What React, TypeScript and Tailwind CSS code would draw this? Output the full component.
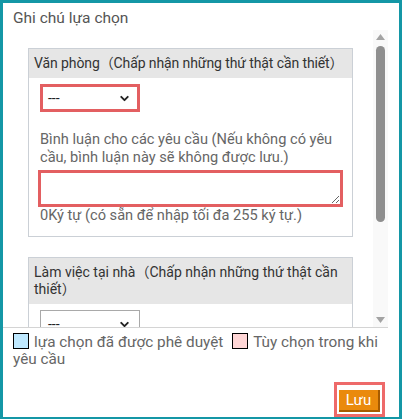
import { ChevronDown } from 'lucide-react'

function Select({ highlight }: { highlight?: boolean }) {
  return (
    <div
      className={
        'flex h-[28px] w-[100px] items-center justify-between bg-white pl-[5px] pr-[6px] text-[14px] text-[#222] ' +
        (highlight ? 'border-[3px] border-[#e35f61]' : 'border border-[#a9a9a9] pl-[7px] pr-[8px]')
      }
    >
      <span>---</span>
      <ChevronDown size={13} strokeWidth={3.5} className="text-[#222]" />
    </div>
  )
}

function Card({ title, nowrap, children }: { title: string; nowrap?: boolean; children?: React.ReactNode }) {
  return (
    <div className="w-[325px] border border-[#cbd0d6] bg-white">
      <div
        className={
          'bg-[#e6e6e6] px-[5px] py-[6px] text-[14px] leading-[17px] text-[#333] ' +
          (nowrap ? 'whitespace-nowrap tracking-[-0.1px]' : '')
        }
      >
        {title}
      </div>
      <div className="px-[11px] pt-[6px] pb-[12px]">{children}</div>
    </div>
  )
}

function App() {
  return (
    <div
      className="flex h-[419px] w-[402px] flex-col border-[3px] border-b-2 border-[#1497a6] bg-white"
      style={{ fontFamily: 'Roboto, "Noto Sans CJK SC", sans-serif' }}
    >
      <div className="h-[27px] pl-[10px] pt-[5px] text-[15.5px] leading-[20px] text-[#555]">Ghi chú lựa chọn</div>

      <div className="mr-[11px] flex h-[298px] border-b border-[#d4d4d4]">
        <div className="flex-1 overflow-hidden pl-[25px] pt-[18px]">
          <Card title="Văn phòng（Chấp nhận những thứ thật cần thiết）" nowrap>
            <Select highlight />
            <p className="mt-[18px] text-[14.6px] leading-[18px] text-[#666]">
              Bình luận cho các yêu cầu (Nếu không có yêu cầu, bình luận này sẽ không được lưu.)
            </p>
            <textarea className="mt-[4px] -ml-[2px] block h-[37px] w-[305px] resize-y border-[3px] border-[#e35f61] bg-white outline-none" />
            <p className="mt-[-1px] text-[14.6px] leading-[18px] text-[#666]">0Ký tự (có sẵn để nhập tối đa 255 ký tự.)</p>
          </Card>
          <div className="mt-[20px]">
            <Card title="Làm việc tại nhà（Chấp nhận những thứ thật cần thiết）">
              <Select />
            </Card>
          </div>
        </div>

        <div className="flex w-[15px] flex-col items-center bg-[#f9f9f9] pt-[4px] pb-[4px]">
          <svg width="9" height="6" viewBox="0 0 9 6">
            <path d="M4.5 0 L9 6 L0 6 Z" fill="#a3a3a3" />
          </svg>
          <div className="mt-[6px] h-[176px] w-[9px] rounded-full bg-[#8f8f8f]" />
          <div className="flex-1" />
          <svg width="9" height="6" viewBox="0 0 9 6">
            <path d="M0 0 L9 0 L4.5 6 Z" fill="#a3a3a3" />
          </svg>
        </div>
      </div>

      <div className="pl-[10px] pr-[16px] pt-[5px] text-[15.3px] leading-[17px] text-[#666]">
        <span className="mr-[5px] inline-block h-[16px] w-[16px] border border-black bg-[#bfe9ff] align-[-2px]" />
        lựa chọn đã được phê duyệt{' '}
        <span className="ml-[5px] mr-[5px] inline-block h-[16px] w-[16px] border border-black bg-[#ffd6d6] align-[-2px]" />
        Tùy chọn trong khi yêu cầu
      </div>

      <div className="flex flex-1 items-end justify-end pr-[14px]">
        <div className="border-[3px] border-[#ee6a6a] bg-white px-[2px] pt-[5px] pb-[2px]">
          <button className="flex h-[22px] w-[41px] items-center justify-center border-r-2 border-b-2 border-[#a65b00] bg-[#ea8a0c] text-[15px] text-white">
            Lưu
          </button>
        </div>
      </div>
    </div>
  )
}

export default App
